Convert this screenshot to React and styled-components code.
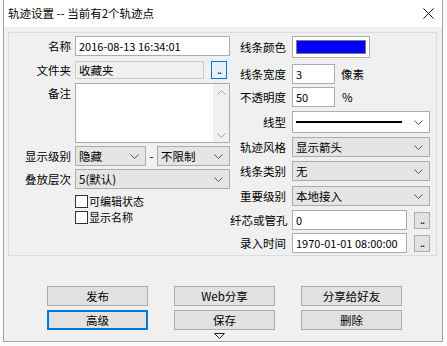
import React from "react";
import styled, { createGlobalStyle } from "styled-components";

const Global = createGlobalStyle`
  * { box-sizing: border-box; }
  html, body { margin: 0; padding: 0; background: #ffffff; }
  body {
    font-family: "Noto Sans CJK SC", "Noto Sans", "Liberation Sans", sans-serif;
    font-size: 11.5px;
    color: #000;
  }
`;

const Desktop = styled.div`
  width: 447px;
  height: 346px;
  padding-left: 3px;
  background: #fbfbfb;
  overflow: hidden;
`;

const Window = styled.div`
  width: 440px;
  height: 342px;
  border: 1px solid #a3a3a3;
  border-top: none;
  display: flex;
  flex-direction: column;
  background: #f0f0f0;
`;

const TitleBar = styled.div`
  height: 27px;
  background: #ffffff;
  display: flex;
  align-items: center;
  justify-content: space-between;
  padding: 0 8px 1px 4px;
`;

const Title = styled.span`
  font-size: 11.5px;
  line-height: 14px;
`;

const Body = styled.div`
  flex: 1;
  display: flex;
  flex-direction: column;
  padding: 5px 5px 0 4px;
`;

const GroupBox = styled.div`
  height: 224px;
  border: 1px solid #dcdcdc;
  display: grid;
  grid-template-columns: 220px 202px;
  column-gap: 1px;
  padding-top: 3px;
`;

const Column = styled.div`
  display: flex;
  flex-direction: column;
`;

const Row = styled.div`
  display: grid;
  grid-template-columns: ${(p) => p.$cols};
  column-gap: ${(p) => p.$gap || 4}px;
  height: ${(p) => p.$h}px;
  margin-top: ${(p) => p.$mt || 0}px;
  align-items: ${(p) => p.$align || "center"};
`;

const Label = styled.span`
  text-align: right;
  white-space: nowrap;
  line-height: 14px;
  padding-top: ${(p) => p.$pt || 0}px;
`;

const Input = styled.div`
  height: 100%;
  border: 1px solid ${(p) => (p.$ro ? "#cccccc" : "#abadb3")};
  background: ${(p) => (p.$ro ? "#f0f0f0" : "#ffffff")};
  display: flex;
  align-items: center;
  padding-left: 3px;
  white-space: nowrap;
  overflow: hidden;
  font-size: ${(p) => (p.$cjk ? "11.5px" : "11px")};
  line-height: 14px;
`;

const FieldPair = styled.div`
  display: grid;
  grid-template-columns: ${(p) => p.$cols};
  column-gap: ${(p) => p.$gap}px;
  height: 100%;
  align-items: center;
`;

const DotButton = styled.div`
  height: ${(p) => p.$h || 17}px;
  border: 1px solid ${(p) => (p.$focus ? "#0078d7" : "#adadad")};
  background: ${(p) => (p.$focus ? "#e5f1fb" : "#e1e1e1")};
  display: flex;
  align-items: flex-end;
  justify-content: center;
  font-size: 11px;
  line-height: 11px;
  padding-bottom: 3px;
  letter-spacing: -1px;
`;

const TextArea = styled.div`
  height: 100%;
  border: 1px solid #abadb3;
  background: #ffffff;
  display: flex;
  justify-content: flex-end;
`;

const ScrollBar = styled.div`
  width: 16px;
  background: #f0f0f0;
  display: flex;
  flex-direction: column;
  justify-content: space-between;
  align-items: center;
  padding: 6px 0 4px;
`;

const Select = styled.div`
  height: 100%;
  border: 1px solid #acacac;
  background: ${(p) => (p.$white ? "#ffffff" : "#e5e5e5")};
  display: flex;
  align-items: center;
  justify-content: space-between;
  padding: 0 6px 0 3px;
  white-space: nowrap;
  line-height: 14px;
`;

const LineSample = styled.div`
  flex: 1;
  height: 2px;
  background: #000;
  margin-right: 12px;
`;

const Dash = styled.span`
  text-align: center;
`;

const Check = styled.label`
  display: flex;
  align-items: center;
  gap: 1px;
  font-size: 11px;
  line-height: 14px;
`;

const Box = styled.span`
  width: 13px;
  height: 13px;
  border: 1px solid #333333;
  background: #ffffff;
`;

const ColorWell = styled.div`
  width: 78px;
  height: 100%;
  border: 1px solid #abadb3;
  background: #ffffff;
  padding: 3px;
`;

const Swatch = styled.div`
  width: 100%;
  height: 100%;
  background: ${(p) => p.$c};
  border: 1px solid #7a7a7a;
`;

const Unit = styled.span`
  line-height: 14px;
`;

const Buttons = styled.div`
  display: grid;
  grid-template-columns: repeat(3, 101px);
  grid-auto-rows: 20px;
  column-gap: 26px;
  row-gap: 4px;
  margin: 30px 0 0 39px;
`;

const Btn = styled.div`
  border: ${(p) => (p.$focus ? "2px solid #0078d7" : "1px solid #adadad")};
  background: #e1e1e1;
  display: flex;
  align-items: center;
  justify-content: center;
  line-height: 14px;
`;

const More = styled.div`
  display: flex;
  justify-content: center;
  margin: 3px 0 0 -6px;
`;

const Chevron = ({ up, color = "#555" }) => (
  <svg width="9" height="5" viewBox="0 0 9 5">
    <polyline
      points={up ? "0.5,4.5 4.5,0.5 8.5,4.5" : "0.5,0.5 4.5,4.5 8.5,0.5"}
      fill="none"
      stroke={color}
      strokeWidth="1"
    />
  </svg>
);

const CloseIcon = () => (
  <svg width="11" height="11" viewBox="0 0 11 11">
    <path d="M0.5 0.5 L10.5 10.5 M10.5 0.5 L0.5 10.5" stroke="#111" strokeWidth="1" />
  </svg>
);

const L = "62px 155px";
const R = "56px 138px";

export default function App() {
  return (
    <>
      <Global />
      <Desktop>
        <Window>
          <TitleBar>
            <Title>轨迹设置 -- 当前有2个轨迹点</Title>
            <CloseIcon />
          </TitleBar>
          <Body>
            <GroupBox>
              <Column>
                <Row $cols={L} $h={20}>
                  <Label>名称</Label>
                  <Input>2016-08-13 16:34:01</Input>
                </Row>
                <Row $cols={L} $h={18} $mt={5}>
                  <Label>文件夹</Label>
                  <FieldPair $cols="129px 16px" $gap={7}>
                    <Input $ro $cjk>收藏夹</Input>
                    <DotButton $focus $h={18}>..</DotButton>
                  </FieldPair>
                </Row>
                <Row $cols={L} $h={60} $mt={4} $align="start">
                  <Label $pt={3}>备注</Label>
                  <TextArea>
                    <ScrollBar>
                      <Chevron up color="#a0a0a0" />
                      <Chevron color="#a0a0a0" />
                    </ScrollBar>
                  </TextArea>
                </Row>
                <Row $cols={L} $h={20} $mt={3}>
                  <Label>显示级别</Label>
                  <FieldPair $cols="71px 9px 73px" $gap={1}>
                    <Select>
                      <span>隐藏</span>
                      <Chevron />
                    </Select>
                    <Dash>-</Dash>
                    <Select>
                      <span>不限制</span>
                      <Chevron />
                    </Select>
                  </FieldPair>
                </Row>
                <Row $cols={L} $h={20} $mt={3}>
                  <Label>叠放层次</Label>
                  <Select>
                    <span>5(默认)</span>
                    <Chevron />
                  </Select>
                </Row>
                <Row $cols={L} $h={16} $mt={4}>
                  <span />
                  <Check>
                    <Box />
                    可编辑状态
                  </Check>
                </Row>
                <Row $cols={L} $h={16}>
                  <span />
                  <Check>
                    <Box />
                    显示名称
                  </Check>
                </Row>
              </Column>

              <Column>
                <Row $cols={R} $gap={6} $h={22}>
                  <Label>线条颜色</Label>
                  <ColorWell>
                    <Swatch $c="#0000ff" />
                  </ColorWell>
                </Row>
                <Row $cols={R} $gap={6} $h={20} $mt={6}>
                  <Label>线条宽度</Label>
                  <FieldPair $cols="43px 40px" $gap={6}>
                    <Input>3</Input>
                    <Unit>像素</Unit>
                  </FieldPair>
                </Row>
                <Row $cols={R} $gap={6} $h={20} $mt={3}>
                  <Label>不透明度</Label>
                  <FieldPair $cols="43px 40px" $gap={7}>
                    <Input>50</Input>
                    <Unit>%</Unit>
                  </FieldPair>
                </Row>
                <Row $cols={R} $gap={6} $h={22} $mt={4}>
                  <Label>线型</Label>
                  <Select $white>
                    <LineSample />
                    <Chevron />
                  </Select>
                </Row>
                <Row $cols={R} $gap={6} $h={20} $mt={4}>
                  <Label>轨迹风格</Label>
                  <Select>
                    <span>显示箭头</span>
                    <Chevron />
                  </Select>
                </Row>
                <Row $cols={R} $gap={6} $h={20} $mt={4}>
                  <Label>线条类别</Label>
                  <Select>
                    <span>无</span>
                    <Chevron />
                  </Select>
                </Row>
                <Row $cols={R} $gap={6} $h={20} $mt={5}>
                  <Label>重要级别</Label>
                  <Select>
                    <span>本地接入</span>
                    <Chevron />
                  </Select>
                </Row>
                <Row $cols={R} $gap={6} $h={20} $mt={4}>
                  <Label>纤芯或管孔</Label>
                  <FieldPair $cols="115px 16px" $gap={7}>
                    <Input>0</Input>
                    <DotButton>..</DotButton>
                  </FieldPair>
                </Row>
                <Row $cols={R} $gap={6} $h={20} $mt={3}>
                  <Label>录入时间</Label>
                  <FieldPair $cols="115px 16px" $gap={7}>
                    <Input>1970-01-01 08:00:00</Input>
                    <DotButton>..</DotButton>
                  </FieldPair>
                </Row>
              </Column>
            </GroupBox>

            <Buttons>
              <Btn>发布</Btn>
              <Btn>Web分享</Btn>
              <Btn>分享给好友</Btn>
              <Btn $focus>高级</Btn>
              <Btn>保存</Btn>
              <Btn>删除</Btn>
            </Buttons>
            <More>
              <svg width="11" height="6" viewBox="0 0 11 6">
                <polygon points="0.5,0.5 10.5,0.5 5.5,5.5" fill="none" stroke="#222" strokeWidth="1" />
              </svg>
            </More>
          </Body>
        </Window>
      </Desktop>
    </>
  );
}
